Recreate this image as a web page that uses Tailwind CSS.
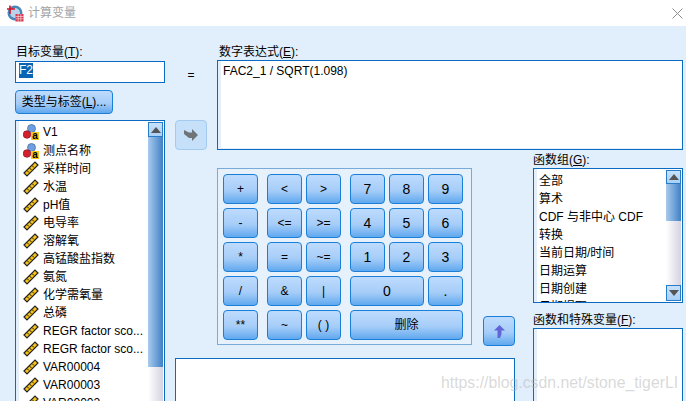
<!doctype html>
<html lang="en">
  <head>
    <meta charset="UTF-8" />
    <title>计算变量</title>
    <script src="https://cdn.jsdelivr.net/npm/@tailwindcss/browser@4"></script>
  </head>

  <body class="w-[686px] h-[401px] overflow-hidden relative bg-[#e1eefb] text-black text-[12px] leading-[14px] font-['Liberation_Sans','Noto_Sans_CJK_SC',sans-serif]">
    <svg class="hidden">
      <symbol id="ruler" viewBox="0 0 16 16">
        <path d="M1 12 L12 1 L15 4 L4 15 Z" fill="#f5c21c" stroke="#222" stroke-width="1.2" />
        <path d="M4 9.500 L6 11.500 M6.500 7 L8.500 9 M9 4.500 L11 6.500" stroke="#222" stroke-width="1" />
      </symbol>
      <symbol id="nominal" viewBox="0 0 16 16">
        <circle cx="8.500" cy="4.500" r="4" fill="#6f9fe0" stroke="#41689c" stroke-width=".7" />
        <circle cx="4" cy="10.500" r="3.800" fill="#d3202c" stroke="#8c1520" stroke-width=".7" />
        <rect x="8" y="8" width="8" height="8" fill="#f7c81e" />
        <text x="12" y="15" text-anchor="middle" font-size="10" font-weight="700" font-family="Liberation Sans" fill="#000">a</text>
      </symbol>
    </svg>

    <!-- title bar -->
    <div class="h-[26px] bg-white flex items-center pl-[7px] pr-[3px]">
      <svg class="w-[17px] h-[17px]" viewBox="0 0 17 17">
        <circle cx="8" cy="8" r="7.500" fill="#4a86b8" />
        <circle cx="8" cy="8" r="5" fill="#b9d3ea" />
        <path d="M3 0.500 V9 M0 4 H8" stroke="#d4142a" stroke-width="1.600" />
        <rect x="8.500" y="9" width="8" height="7.500" fill="#d8374c" />
        <path d="M8.500 11.500 H16.500 M8.500 13.800 H16.500 M11.200 9 V16.500 M13.800 9 V16.500" stroke="#f7d5da" stroke-width=".7" />
      </svg>
      <span class="ml-[4px] text-[#a3a3a3]">计算变量</span>
      <svg class="ml-auto w-[11px] h-[11px]" viewBox="0 0 11 11">
        <path d="M.5 .5 L10.500 10.500 M10.500 .5 L.5 10.500" stroke="#8c8c8c" stroke-width="1" fill="none" />
      </svg>
    </div>

    <div class="flex pl-[15px]">
      <!-- variable list column -->
      <div class="w-[150px]">
        <div class="mt-[19px] pl-px">目标变量(<u>T</u>):</div>
        <div class="mt-[2px] h-[22px] bg-white border border-[#0b6bc3] pl-[3px] pt-[1px]">
          <span class="inline-block h-[15px] bg-[#0a64b4] text-white leading-[15px]">F2</span>
        </div>
        <button class="mt-[7px] block w-[98px] h-[24px] rounded-[4px] border border-[#1a7fd8] bg-linear-to-b from-[#bedbfd] via-[#a6cdf8] via-55% to-[#5fa8ee]">类型与标签(<u>L</u>)...</button>
        <div class="mt-[6px] h-[300px] bg-white border border-[#0b6bc3] flex shadow-[inset_3px_0_0_#e3f0fc]">
          <ul class="w-[132px] pl-[7px] pt-[1px]">
            <li class="h-[20px] flex items-center gap-[4px]"><svg class="w-[16px] h-[16px]"><use href="#nominal" /></svg>V1</li>
            <li class="h-[18px] flex items-center gap-[4px]"><svg class="w-[16px] h-[16px]"><use href="#nominal" /></svg>测点名称</li>
            <li class="h-[18px] flex items-center gap-[4px]"><svg class="w-[16px] h-[16px]"><use href="#ruler" /></svg>采样时间</li>
            <li class="h-[18px] flex items-center gap-[4px]"><svg class="w-[16px] h-[16px]"><use href="#ruler" /></svg>水温</li>
            <li class="h-[18px] flex items-center gap-[4px]"><svg class="w-[16px] h-[16px]"><use href="#ruler" /></svg>pH值</li>
            <li class="h-[18px] flex items-center gap-[4px]"><svg class="w-[16px] h-[16px]"><use href="#ruler" /></svg>电导率</li>
            <li class="h-[18px] flex items-center gap-[4px]"><svg class="w-[16px] h-[16px]"><use href="#ruler" /></svg>溶解氧</li>
            <li class="h-[18px] flex items-center gap-[4px]"><svg class="w-[16px] h-[16px]"><use href="#ruler" /></svg>高锰酸盐指数</li>
            <li class="h-[18px] flex items-center gap-[4px]"><svg class="w-[16px] h-[16px]"><use href="#ruler" /></svg>氨氮</li>
            <li class="h-[18px] flex items-center gap-[4px]"><svg class="w-[16px] h-[16px]"><use href="#ruler" /></svg>化学需氧量</li>
            <li class="h-[18px] flex items-center gap-[4px]"><svg class="w-[16px] h-[16px]"><use href="#ruler" /></svg>总磷</li>
            <li class="h-[18px] flex items-center gap-[4px]"><svg class="w-[16px] h-[16px]"><use href="#ruler" /></svg>REGR factor sco...</li>
            <li class="h-[18px] flex items-center gap-[4px]"><svg class="w-[16px] h-[16px]"><use href="#ruler" /></svg>REGR factor sco...</li>
            <li class="h-[18px] flex items-center gap-[4px]"><svg class="w-[16px] h-[16px]"><use href="#ruler" /></svg>VAR00004</li>
            <li class="h-[18px] flex items-center gap-[4px]"><svg class="w-[16px] h-[16px]"><use href="#ruler" /></svg>VAR00003</li>
            <li class="h-[18px] flex items-center gap-[4px]"><svg class="w-[16px] h-[16px]"><use href="#ruler" /></svg>VAR00002</li>
          </ul>
          <div class="w-[15px] my-px flex flex-col">
            <div class="h-[15px] border border-[#2a7cc9] bg-linear-to-b from-[#c8e1fb] to-[#a9d0f7] flex items-center justify-center">
              <div class="w-0 h-0 border-x-[5px] border-x-transparent border-b-[6px] border-b-[#555]"></div>
            </div>
            <div class="h-[230px] bg-linear-to-r from-[#a9cbee] to-[#3f80c6]"></div>
            <div class="flex-1 bg-linear-to-r from-white to-[#d5d3e2]"></div>
          </div>
        </div>
      </div>

      <div class="ml-[10px] w-[508px]">
        <!-- expression row -->
        <div class="flex h-[124px]">
          <div class="w-[42px]">
            <div class="mt-[42px] w-[32px] text-center">=</div>
            <button class="mt-[38px] w-[32px] h-[30px] rounded-[4px] border border-[#a3cbf2] bg-[#c6e0fa] flex items-center justify-center">
              <svg class="w-[16px] h-[14px]" viewBox="0 0 16 14">
                <path d="M1 2 L6 4.500 H9 V1 L15 7 L9 13 V10 H6 L1 6 Z" fill="#6f7478" />
              </svg>
            </button>
          </div>
          <div class="flex-1">
            <div class="mt-[19px] pl-[2px]">数字表达式(<u>E</u>):</div>
            <div class="mt-px h-[90px] bg-white border border-[#0b6bc3] pl-[5px] pt-[3px] shadow-[inset_3px_0_0_#e3f0fc,inset_0_-1px_0_#e3f0fc]">FAC2_1 / SQRT(1.098)</div>
          </div>
        </div>

        <div class="flex">
          <div class="w-[340px]">
            <div class="flex pl-[42px] pt-[18px]">
              <!-- calculator keypad -->
              <div class="w-[255px] h-[177px] border border-[#79abd9] bg-[#e6f1fc] p-[5px] flex gap-[9px]">
                <div class="grid grid-cols-[35px] auto-rows-[30px] gap-[4px]">
                  <button class="rounded-[4px] border border-[#1a7fd8] bg-linear-to-b from-[#bedbfd] via-[#a6cdf8] via-55% to-[#5fa8ee]">+</button>
                  <button class="rounded-[4px] border border-[#1a7fd8] bg-linear-to-b from-[#bedbfd] via-[#a6cdf8] via-55% to-[#5fa8ee]">-</button>
                  <button class="rounded-[4px] border border-[#1a7fd8] bg-linear-to-b from-[#bedbfd] via-[#a6cdf8] via-55% to-[#5fa8ee]">*</button>
                  <button class="rounded-[4px] border border-[#1a7fd8] bg-linear-to-b from-[#bedbfd] via-[#a6cdf8] via-55% to-[#5fa8ee]">/</button>
                  <button class="rounded-[4px] border border-[#1a7fd8] bg-linear-to-b from-[#bedbfd] via-[#a6cdf8] via-55% to-[#5fa8ee]">**</button>
                </div>
                <div class="grid grid-cols-[35px_35px] auto-rows-[30px] gap-[4px]">
                  <button class="rounded-[4px] border border-[#1a7fd8] bg-linear-to-b from-[#bedbfd] via-[#a6cdf8] via-55% to-[#5fa8ee]">&lt;</button>
                  <button class="rounded-[4px] border border-[#1a7fd8] bg-linear-to-b from-[#bedbfd] via-[#a6cdf8] via-55% to-[#5fa8ee]">&gt;</button>
                  <button class="rounded-[4px] border border-[#1a7fd8] bg-linear-to-b from-[#bedbfd] via-[#a6cdf8] via-55% to-[#5fa8ee]">&lt;=</button>
                  <button class="rounded-[4px] border border-[#1a7fd8] bg-linear-to-b from-[#bedbfd] via-[#a6cdf8] via-55% to-[#5fa8ee]">&gt;=</button>
                  <button class="rounded-[4px] border border-[#1a7fd8] bg-linear-to-b from-[#bedbfd] via-[#a6cdf8] via-55% to-[#5fa8ee]">=</button>
                  <button class="rounded-[4px] border border-[#1a7fd8] bg-linear-to-b from-[#bedbfd] via-[#a6cdf8] via-55% to-[#5fa8ee]">~=</button>
                  <button class="rounded-[4px] border border-[#1a7fd8] bg-linear-to-b from-[#bedbfd] via-[#a6cdf8] via-55% to-[#5fa8ee]">&amp;</button>
                  <button class="rounded-[4px] border border-[#1a7fd8] bg-linear-to-b from-[#bedbfd] via-[#a6cdf8] via-55% to-[#5fa8ee]">|</button>
                  <button class="rounded-[4px] border border-[#1a7fd8] bg-linear-to-b from-[#bedbfd] via-[#a6cdf8] via-55% to-[#5fa8ee]">~</button>
                  <button class="rounded-[4px] border border-[#1a7fd8] bg-linear-to-b from-[#bedbfd] via-[#a6cdf8] via-55% to-[#5fa8ee]">( )</button>
                </div>
                <div class="grid grid-cols-[35px_35px_35px] auto-rows-[30px] gap-[4px] text-[14px]">
                  <button class="rounded-[4px] border border-[#1a7fd8] bg-linear-to-b from-[#bedbfd] via-[#a6cdf8] via-55% to-[#5fa8ee]">7</button>
                  <button class="rounded-[4px] border border-[#1a7fd8] bg-linear-to-b from-[#bedbfd] via-[#a6cdf8] via-55% to-[#5fa8ee]">8</button>
                  <button class="rounded-[4px] border border-[#1a7fd8] bg-linear-to-b from-[#bedbfd] via-[#a6cdf8] via-55% to-[#5fa8ee]">9</button>
                  <button class="rounded-[4px] border border-[#1a7fd8] bg-linear-to-b from-[#bedbfd] via-[#a6cdf8] via-55% to-[#5fa8ee]">4</button>
                  <button class="rounded-[4px] border border-[#1a7fd8] bg-linear-to-b from-[#bedbfd] via-[#a6cdf8] via-55% to-[#5fa8ee]">5</button>
                  <button class="rounded-[4px] border border-[#1a7fd8] bg-linear-to-b from-[#bedbfd] via-[#a6cdf8] via-55% to-[#5fa8ee]">6</button>
                  <button class="rounded-[4px] border border-[#1a7fd8] bg-linear-to-b from-[#bedbfd] via-[#a6cdf8] via-55% to-[#5fa8ee]">1</button>
                  <button class="rounded-[4px] border border-[#1a7fd8] bg-linear-to-b from-[#bedbfd] via-[#a6cdf8] via-55% to-[#5fa8ee]">2</button>
                  <button class="rounded-[4px] border border-[#1a7fd8] bg-linear-to-b from-[#bedbfd] via-[#a6cdf8] via-55% to-[#5fa8ee]">3</button>
                  <button class="col-span-2 rounded-[4px] border border-[#1a7fd8] bg-linear-to-b from-[#bedbfd] via-[#a6cdf8] via-55% to-[#5fa8ee]">0</button>
                  <button class="rounded-[4px] border border-[#1a7fd8] bg-linear-to-b from-[#bedbfd] via-[#a6cdf8] via-55% to-[#5fa8ee]">.</button>
                  <button class="col-span-3 rounded-[4px] border border-[#1a7fd8] bg-linear-to-b from-[#bedbfd] via-[#a6cdf8] via-55% to-[#5fa8ee] text-[12px]">删除</button>
                </div>
              </div>
              <button class="ml-[11px] mt-[148px] w-[32px] h-[30px] rounded-[4px] border border-[#1a7fd8] bg-linear-to-b from-[#bedbfd] via-[#a6cdf8] via-55% to-[#5fa8ee] flex items-center justify-center">
                <svg class="w-[11px] h-[13px]" viewBox="0 0 11 13">
                  <path d="M5.500 0 L11 5.500 H7.500 V9 L6 13 H3.500 V5.500 H0 Z" fill="#6264d8" />
                </svg>
              </button>
            </div>
            <div class="mt-[12px] h-[100px] bg-white border border-[#0b6bc3]"></div>
          </div>

          <!-- function pickers -->
          <div class="ml-[18px] w-[150px]">
            <div class="mt-[3px]">函数组(<u>G</u>):</div>
            <div class="mt-px h-[135px] bg-white border border-[#0b6bc3] flex shadow-[inset_3px_0_0_#e3f0fc]">
              <ul class="w-[132px] h-[133px] overflow-hidden pl-[5px] pt-[3px]">
                <li class="h-[18px] flex items-center">全部</li>
                <li class="h-[18px] flex items-center">算术</li>
                <li class="h-[18px] flex items-center">CDF 与非中心 CDF</li>
                <li class="h-[18px] flex items-center">转换</li>
                <li class="h-[18px] flex items-center">当前日期/时间</li>
                <li class="h-[18px] flex items-center">日期运算</li>
                <li class="h-[18px] flex items-center">日期创建</li>
                <li class="h-[18px] flex items-center">日期提取</li>
              </ul>
              <div class="w-[15px] my-px flex flex-col">
                <div class="h-[14px] border border-[#2a7cc9] bg-linear-to-b from-[#c8e1fb] to-[#a9d0f7] flex items-center justify-center">
                  <div class="w-0 h-0 border-x-[5px] border-x-transparent border-b-[6px] border-b-[#555]"></div>
                </div>
                <div class="h-[37px] bg-linear-to-r from-[#a9cbee] to-[#3f80c6]"></div>
                <div class="flex-1 bg-linear-to-r from-white to-[#d5d3e2]"></div>
                <div class="h-[16px] border border-[#2a7cc9] bg-linear-to-b from-[#c8e1fb] to-[#a9d0f7] flex items-center justify-center">
                  <div class="w-0 h-0 border-x-[5px] border-x-transparent border-t-[6px] border-t-[#555]"></div>
                </div>
              </div>
            </div>
            <div class="mt-[10px]">函数和特殊变量(<u>F</u>):</div>
            <div class="mt-px h-[100px] bg-white border border-[#0b6bc3] shadow-[inset_3px_0_0_#e3f0fc]"></div>
          </div>
        </div>
      </div>
    </div>

    <!-- watermark -->
    <div class="absolute left-[441px] top-[374px] text-[15.8px] leading-[18px] text-[#b4b4b4]/50">https://blog.csdn.net/stone_tigerLI</div>
  </body>
</html>
